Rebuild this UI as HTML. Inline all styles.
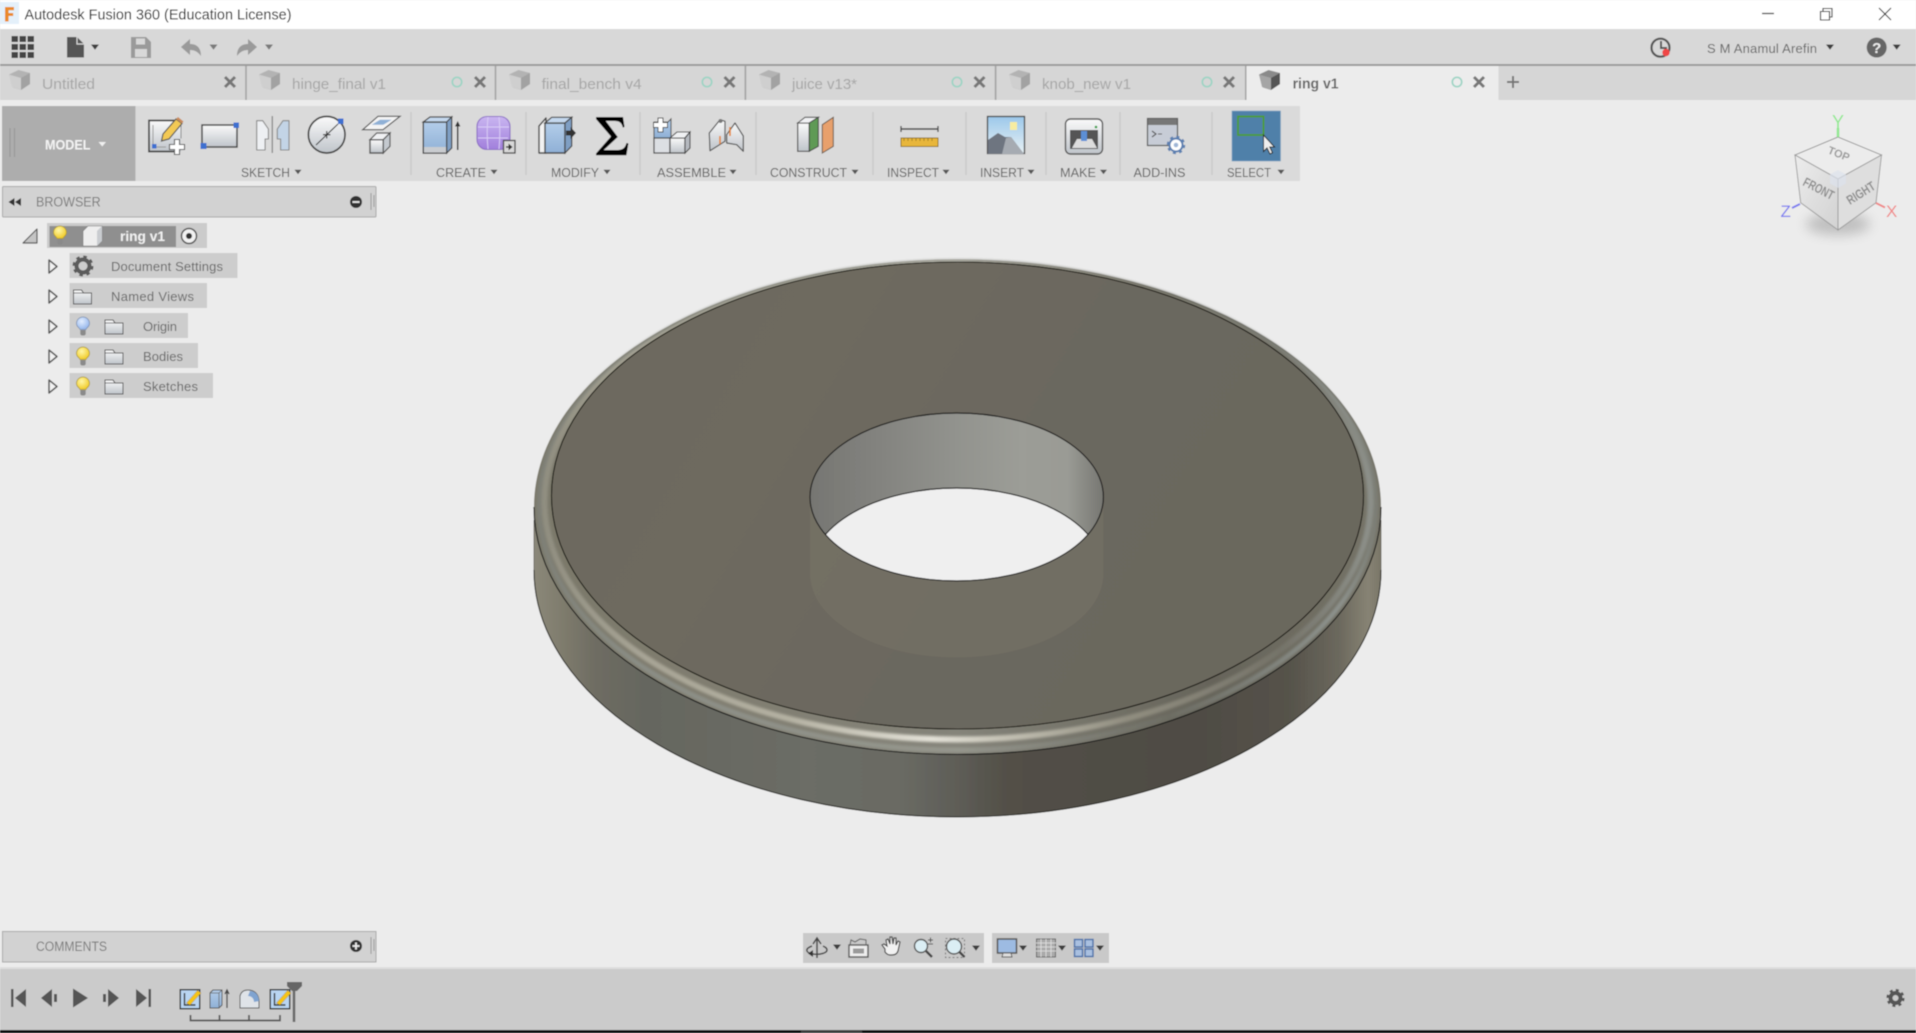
<!DOCTYPE html>
<html><head><meta charset="utf-8"><title>Autodesk Fusion 360</title>
<style>
html,body{margin:0;padding:0;background:#ececec;width:1916px;height:1033px;overflow:hidden}
svg{display:block;position:absolute;left:0;top:0}
text{font-family:"Liberation Sans",sans-serif}
.tab{font-size:15px;fill:#a6a6a6}
.lbl{font-size:13px;fill:#5f5f5f}
.tree{font-size:13px;fill:#666}
</style></head><body>
<svg width="1916" height="1033" viewBox="0 0 1916 1033" xmlns="http://www.w3.org/2000/svg">
<defs>
<filter id="soft" x="0" y="0" width="100%" height="100%"><feGaussianBlur stdDeviation="0.45"/></filter>
<filter id="b2" x="-5%" y="-5%" width="110%" height="110%"><feGaussianBlur stdDeviation="1.2"/></filter>
<filter id="b6" x="-30%" y="-50%" width="160%" height="200%"><feGaussianBlur stdDeviation="6"/></filter>
<linearGradient id="lt" x1="0" y1="0" x2="0" y2="1"><stop offset="0" stop-color="#fafafa"/><stop offset="1" stop-color="#bfc4ca"/></linearGradient>
<linearGradient id="blu" x1="0" y1="0" x2="0" y2="1"><stop offset="0" stop-color="#b3cde9"/><stop offset="1" stop-color="#8fb0d6"/></linearGradient>
<linearGradient id="sky" x1="0" y1="0" x2="0" y2="1"><stop offset="0" stop-color="#9cc8ea"/><stop offset="1" stop-color="#e8f1f5"/></linearGradient>
<linearGradient id="pur" x1="0" y1="0" x2="0" y2="1"><stop offset="0" stop-color="#c9b5f0"/><stop offset="1" stop-color="#a17fdc"/></linearGradient>
<radialGradient id="ybulb" cx=".4" cy=".35" r=".7"><stop offset="0" stop-color="#fff7a8"/><stop offset="1" stop-color="#f0c81e"/></radialGradient>
<radialGradient id="bbulb" cx=".4" cy=".35" r=".7"><stop offset="0" stop-color="#e3eeff"/><stop offset="1" stop-color="#8fb2ea"/></radialGradient>
<linearGradient id="side" gradientUnits="userSpaceOnUse" x1="534" y1="0" x2="1381" y2="0">
<stop offset="0" stop-color="#8b8879"/><stop offset=".03" stop-color="#807d6e"/><stop offset=".07" stop-color="#6f6d63"/><stop offset=".13" stop-color="#65665f"/><stop offset=".32" stop-color="#6c6d66"/><stop offset=".43" stop-color="#6a6b64"/><stop offset=".5" stop-color="#5e5d57"/><stop offset=".56" stop-color="#524f47"/><stop offset=".78" stop-color="#4f4c44"/><stop offset=".89" stop-color="#55524a"/><stop offset=".95" stop-color="#6b685d"/><stop offset=".985" stop-color="#878374"/><stop offset="1" stop-color="#7a7668"/></linearGradient>
<linearGradient id="fil" gradientUnits="userSpaceOnUse" x1="534" y1="0" x2="1381" y2="0">
<stop offset="0" stop-color="#7a786a"/><stop offset=".15" stop-color="#7f7c6e"/><stop offset=".5" stop-color="#85847a"/><stop offset=".8" stop-color="#66645a"/><stop offset="1" stop-color="#767468"/></linearGradient>
<linearGradient id="hi" gradientUnits="userSpaceOnUse" x1="534" y1="0" x2="1381" y2="0">
<stop offset="0" stop-color="#8e8c7e"/><stop offset=".12" stop-color="#a6a394"/><stop offset=".3" stop-color="#b4b1a2"/><stop offset=".47" stop-color="#e4e2d8"/><stop offset=".55" stop-color="#c6c3b6"/><stop offset=".7" stop-color="#918e80"/><stop offset=".88" stop-color="#757369"/><stop offset="1" stop-color="#8f938d"/></linearGradient>
<linearGradient id="hi2" gradientUnits="userSpaceOnUse" x1="534" y1="0" x2="1381" y2="0">
<stop offset="0" stop-color="#7e7f76"/><stop offset=".12" stop-color="#8a8d85"/><stop offset=".5" stop-color="#96978e"/><stop offset=".75" stop-color="#6d6d64"/><stop offset=".95" stop-color="#8d928d"/><stop offset="1" stop-color="#7a7b72"/></linearGradient>
<linearGradient id="face" gradientUnits="userSpaceOnUse" x1="552" y1="263" x2="1363" y2="729">
<stop offset="0" stop-color="#6d695f"/><stop offset=".3" stop-color="#6e6a5f"/><stop offset=".6" stop-color="#6b675e"/><stop offset="1" stop-color="#6c685d"/></linearGradient>
<linearGradient id="wall" gradientUnits="userSpaceOnUse" x1="810" y1="0" x2="1103" y2="0">
<stop offset="0" stop-color="#767672"/><stop offset=".25" stop-color="#848480"/><stop offset=".5" stop-color="#92938e"/><stop offset=".72" stop-color="#9c9d97"/><stop offset=".88" stop-color="#9a9b95"/><stop offset="1" stop-color="#777772"/></linearGradient>
<clipPath id="holeTop"><ellipse cx="956.7" cy="497" rx="146.7" ry="84"/></clipPath>
<linearGradient id="cubeF" x1="0" y1="0" x2="1" y2="1"><stop offset="0" stop-color="#ececec"/><stop offset="1" stop-color="#d2d2d2"/></linearGradient>
<g id="caret"><path d="M-4-2.500h8L0 2.700z" fill="#3c3c3c"/></g>
<g id="caretL"><path d="M-3.500-2.300h7L0 2.300z" fill="#555"/></g>
<g id="tabcube"><path d="M0 4.5 9.5 0 21 3v11l-9 6-8-2.5z" fill="#b3b3b3"/><path d="M0 4.5 12 8v12l-9-3z" fill="#cfcfcf"/><path d="M12 8l9-5v11l-9 6z" fill="#a2a2a2"/></g>
<g id="x"><path d="M-5-5 5 5M5-5-5 5" stroke="#777" stroke-width="3"/></g>
<g id="dot"><circle r="4.7" fill="none" stroke="#9cd4c4" stroke-width="1.7"/></g>
<g id="bulbY"><path d="M-3-.5c0-1.500-3.500-2.500-3.500-6a6.500 6.500 0 0 1 13 0c0 3.500-3.500 4.500-3.500 6z" fill="url(#ybulb)" stroke="#a89530" stroke-width=".8"/><path d="M-2.700 0h5.400v4.200l-1.200 1.300h-3l-1.200-1.300z" fill="#8a8a8a"/></g>
<g id="bulbB"><path d="M-3-.5c0-1.500-3.500-2.500-3.500-6a6.500 6.500 0 0 1 13 0c0 3.500-3.500 4.500-3.500 6z" fill="url(#bbulb)" stroke="#7d90b0" stroke-width=".8"/><path d="M-2.700 0h5.400v4.200l-1.200 1.300h-3l-1.200-1.300z" fill="#8a8a8a"/></g>
<g id="folder"><path d="M.5 15V1h8l2 3h8v11z" fill="url(#lt)" stroke="#555" stroke-width="1"/><path d="M.5 4h18" stroke="#555" stroke-width=".8"/></g>
<g id="arrow"><path d="M1 1 9 7.5 1 14z" fill="#f2f2f2" stroke="#555" stroke-width="1.5" stroke-linejoin="round"/></g>
<g id="skico"><rect x=".7" y=".7" width="19.5" height="19" fill="#b9d6f2" stroke="#2b2b2b" stroke-width="1.4"/><path d="M5 4v12h11" fill="none" stroke="#333" stroke-width="1.4"/><path d="M7 14 18 1.500l3.500 2.500-11 12z" fill="#f5c518" stroke="#8a6d00" stroke-width=".4"/></g>
</defs>

<g filter="url(#soft)">
<rect width="1916" height="1033" fill="#ececec"/>
<rect width="1916" height="29" fill="#fff"/>
<rect y="29" width="1916" height="35" fill="#d8d8d8"/>
<rect y="64" width="1916" height="2" fill="#9b9b9b"/>
<rect y="66" width="1916" height="34" fill="#d6d6d6"/>

<!-- title bar -->
<rect x="0" y="2" width="19" height="22" fill="#e4f0fa"/>
<path d="M5 7h9v3.2H8.6v2.8h4.6v3H8.6v5.5H5z" fill="#ea8a2a"/>
<text x="24.5" y="19.500" font-size="14.5" fill="#111" textLength="267" lengthAdjust="spacingAndGlyphs">Autodesk Fusion 360 (Education License)</text>
<path d="M1762 13.5h12" stroke="#111" stroke-width="1.2"/>
<path d="M1823 11V8.5h9V17h-2.5M1820.5 11.5h9v8.5h-9z" fill="none" stroke="#111" stroke-width="1.1"/>
<path d="M1879 8l12 12M1891 8l-12 12" stroke="#111" stroke-width="1"/>

<!-- toolbar left -->
<g fill="#444"><rect x="11.5" y="36" width="6.5" height="6"/><rect x="19.5" y="36" width="6.5" height="6"/><rect x="27.5" y="36" width="6.5" height="6"/><rect x="11.5" y="44" width="6.5" height="6"/><rect x="19.5" y="44" width="6.5" height="6"/><rect x="27.5" y="44" width="6.5" height="6"/><rect x="11.5" y="52" width="6.5" height="6"/><rect x="19.5" y="52" width="6.5" height="6"/><rect x="27.5" y="52" width="6.5" height="6"/></g>
<path d="M67 37h10l7 7v13.5H67z" fill="#555"/><path d="M77 37v7h7" fill="none" stroke="#d8d8d8" stroke-width="1.2"/>
<use href="#caret" x="95" y="47"/>
<path d="M131 37h15l5 5v16h-20z" fill="#9a9a9a"/><rect x="136" y="38.5" width="9" height="6" fill="#d8d8d8"/><rect x="135" y="49" width="12" height="8" fill="#d8d8d8"/>
<path d="M181 47l9-8v5c7 0 11 4 11 12-3-4-6-6-11-6v5z" fill="#9a9a9a"/>
<use href="#caret" x="213.5" y="47" opacity=".6"/>
<path d="M257 47l-9-8v5c-7 0-11 4-11 12 3-4 6-6 11-6v5z" fill="#9a9a9a"/>
<use href="#caret" x="269" y="47" opacity=".6"/>

<!-- toolbar right -->
<circle cx="1660.5" cy="47.7" r="9" fill="none" stroke="#555" stroke-width="2.2"/>
<path d="M1661 41v7h6" fill="none" stroke="#555" stroke-width="2"/>
<circle cx="1666" cy="52.5" r="3.7" fill="#ef4444"/>
<text x="1707" y="53" font-size="13" fill="#666" textLength="110" lengthAdjust="spacing">S M Anamul Arefin</text>
<use href="#caret" x="1830" y="47"/>
<circle cx="1876.7" cy="47.5" r="10" fill="#666"/>
<text x="1876.7" y="53" font-size="15" font-weight="bold" fill="#eee" text-anchor="middle">?</text>
<use href="#caret" x="1896.7" y="47"/>

<!-- tabs -->
<g stroke="#a3a3a3" stroke-width="1.6"><path d="M246 66v34M495.5 66v34M745.4 66v34M995.6 66v34M1245.8 66v34"/></g>
<rect x="1246.5" y="66" width="252" height="40" fill="#ececec"/>
<use href="#tabcube" x="9" y="70"/>
<text x="42" y="89" class="tab" textLength="53" lengthAdjust="spacingAndGlyphs">Untitled</text>
<use href="#x" x="230" y="82"/>
<use href="#tabcube" x="259" y="70"/>
<text x="292" y="89" class="tab" textLength="94" lengthAdjust="spacingAndGlyphs">hinge_final v1</text>
<use href="#dot" x="457" y="82"/><use href="#x" x="480" y="82"/>
<use href="#tabcube" x="509" y="70"/>
<text x="541.6" y="89" class="tab" textLength="100" lengthAdjust="spacingAndGlyphs">final_bench v4</text>
<use href="#dot" x="707" y="82"/><use href="#x" x="729.5" y="82"/>
<use href="#tabcube" x="759" y="70"/>
<text x="792" y="89" class="tab" textLength="65" lengthAdjust="spacingAndGlyphs">juice v13*</text>
<use href="#dot" x="957" y="82"/><use href="#x" x="979.5" y="82"/>
<use href="#tabcube" x="1009" y="70"/>
<text x="1042" y="89" class="tab" textLength="89" lengthAdjust="spacingAndGlyphs">knob_new v1</text>
<use href="#dot" x="1207" y="82"/><use href="#x" x="1229" y="82"/>
<g transform="translate(1259,70)"><path d="M0 4.5 9.5 0 21 3v11l-9 6-8-2.5z" fill="#8a8a8a"/><path d="M0 4.5 12 8v12l-9-3z" fill="#a5a5a5"/><path d="M12 8l9-5v11l-9 6z" fill="#555"/></g>
<text x="1292.6" y="88.500" font-size="14.5" font-weight="bold" fill="#666" textLength="46" lengthAdjust="spacingAndGlyphs">ring v1</text>
<use href="#dot" x="1457" y="82"/><use href="#x" x="1479" y="82"/>
<path d="M1513 76v12M1507 82h12" stroke="#777" stroke-width="2"/>

<!-- ribbon -->
<rect x="2" y="106" width="1298" height="75" fill="#dadada"/>
<rect x="2" y="106" width="133.5" height="75" fill="#adadad"/>
<path d="M10 128v29M14.5 128v29" stroke="#9a9a9a" stroke-width="1.2"/>
<text x="45" y="149.500" font-size="13.5" font-weight="bold" fill="#f4f4f4" textLength="45.5" lengthAdjust="spacingAndGlyphs">MODEL</text>
<path d="M98.500 142h7.500l-3.750 4.500z" fill="#f0f0f0"/>
<g stroke="#c6c6c6" stroke-width="1.2"><path d="M411 112v63M526 112v63M640 112v63M756 112v63M873 112v63M966 112v63M1046 112v63M1120 112v63M1212 112v63"/></g>

<!-- Sketch icons -->
<path d="M149 120.500h32v31h-32z" fill="url(#lt)"/>
<path d="M181 120.500h-32v31h29" fill="none" stroke="#444" stroke-width="1.700"/><path d="M181 120.500v18" stroke="#888" stroke-width="1"/>
<path d="M153 125v22h13" fill="none" stroke="#999" stroke-width="1"/>
<rect x="152" y="144" width="4.500" height="4.500" fill="#3c6fd0"/>
<path d="M163 134 176 119l6 4.500-13 15.500-7.500 2z" fill="#f3c954" stroke="#555" stroke-width="1.200"/>
<path d="M176 119l6 4.500 1.500-2-5.500-4.500z" fill="#c98a5a"/>
<path d="M174.500 139.500h5v5h5v5h-5v5h-5v-5h-5v-5h5z" fill="#fff" stroke="#555" stroke-width="1.100"/>
<rect x="202" y="125" width="35" height="22" fill="url(#lt)" stroke="#444" stroke-width="1.500"/>
<rect x="233.500" y="122.500" width="5.500" height="5.500" fill="#3c6fd0"/><rect x="200.500" y="143" width="6" height="6" fill="#3c6fd0"/>
<path d="M256.700 120.700h6l5.700 8.300v10h-3.300v11h-8.400z" fill="#eef0f3" stroke="#888" stroke-width="1.100" stroke-linejoin="round"/>
<path d="M272.300 116v37" stroke="#888" stroke-width="1.300"/>
<path d="M289 120.700h-6l-5.700 8.300v10h3.300v11h8.400z" fill="#c3d4e6" stroke="#888" stroke-width="1.100" stroke-linejoin="round"/>
<circle cx="326.700" cy="134.700" r="18.300" fill="url(#lt)" stroke="#444" stroke-width="1.700"/>
<path d="M316 145l22-21M323 134.700h7.500M326.700 131v7.500" stroke="#333" stroke-width="1.100"/>
<rect x="338" y="118.500" width="5.500" height="5.500" fill="#3c6fd0"/>
<path d="M362.700 129.700 378 116.300h22l-17 13.400z" fill="#f4f4f4" stroke="#555" stroke-width="1.200"/>
<path d="M371.700 124.700 380 119.700h11.700l-8.400 5z" fill="#8fb0d6"/>
<path d="M370 139.700h13.300V153H370z" fill="url(#lt)" stroke="#555" stroke-width="1.400"/>
<path d="M370 139.700 376.700 133H390l-6.700 6.700z" fill="#f0f1f3" stroke="#555" stroke-width="1.200"/>
<path d="M383.300 139.700 390 133v13.300L383.300 153z" fill="#c4c9cf" stroke="#555" stroke-width="1.200"/>

<!-- Create -->
<path d="M423.300 122h23.400v31h-23.400z" fill="url(#blu)" stroke="#444" stroke-width="1.400"/>
<rect x="424" y="147" width="22" height="5.500" fill="#c9ccd0"/>
<path d="M423.300 122 430 117h21.700l-5 5z" fill="#c4d8ee" stroke="#444" stroke-width="1.200"/>
<path d="M446.700 122l5-5v31l-5 5z" fill="#7f9fc4" stroke="#444" stroke-width="1.200"/>
<path d="M457.700 150v-26" stroke="#333" stroke-width="1.500"/><path d="M455 126.500l2.700-5.500 2.700 5.500z" fill="#333"/>
<rect x="477" y="116.500" width="33" height="33" rx="10" fill="url(#pur)" stroke="#8d70c4" stroke-width="1.100"/>
<path d="M478 127h31M478 138h30M488 117c-1 10-1 22 0 32M499 117c1 10 1 22 0 32" stroke="#dacdf6" stroke-width="1" fill="none"/>
<rect x="503.500" y="140.500" width="11.500" height="12.500" fill="#d9d9d9" stroke="#444" stroke-width="1.300"/>
<path d="M506 147h3" stroke="#333" stroke-width="1.400"/><path d="M508.500 143.500l4 3.500-4 3.500z" fill="#333"/>

<!-- Modify -->
<path d="M539 153v-27l7-8v35z" fill="#f2f2f2" stroke="#444" stroke-width="1.400" stroke-linejoin="round"/>
<path d="M545 123h20v30h-20z" fill="url(#blu)" stroke="#444" stroke-width="1.400"/>
<path d="M545 123l6.700-5.700h20L565 123z" fill="#c4d8ee" stroke="#444" stroke-width="1.200"/>
<path d="M565 123l6.700-5.700V146L565 153z" fill="#7f9fc4" stroke="#444" stroke-width="1.200"/>
<path d="M566 130.500h4.500V127l5.500 6-5.500 6v-3.500H566z" fill="#333"/>
<path d="M596 117h27l1.500 10-1.700.5c-1-4.500-3-6.500-8-6.500h-9l12 16-14 13h14c5 0 7.500-2.500 8.700-7l1.900.5-2 11.700H596v-1.700l15-17-15-17.500z" fill="#000"/>

<!-- Assemble -->
<path d="M654 122h14l3-3v19h-17z" fill="url(#blu)" stroke="#555" stroke-width="1.100"/>
<path d="M658 118h5v4.500h4.500v5H663v4.500h-5v-4.500h-4.500v-5h4.500z" fill="#fff" stroke="#444" stroke-width="1"/>
<rect x="654" y="138" width="16" height="15" fill="#dcdfe3" stroke="#444" stroke-width="1.200"/>
<rect x="670" y="138" width="15" height="15" fill="url(#lt)" stroke="#444" stroke-width="1.200"/>
<path d="M670 138l7-6h13l-5 6z" fill="#f0f1f3" stroke="#444" stroke-width="1.100"/>
<path d="M685 138l5-6v16l-5 5z" fill="#b5b9bf" stroke="#444" stroke-width="1.100"/>
<path d="M709.300 133 720 119.700l5 1.600v20l-15 9.400z" fill="url(#lt)" stroke="#555" stroke-width="1.200" stroke-linejoin="round"/>
<path d="M735 123 743.300 136v15.300l-6.600-6.600-10-1.700v-8.300z" fill="url(#lt)" stroke="#555" stroke-width="1.200" stroke-linejoin="round"/>
<circle cx="720.500" cy="121" r="2" fill="#777"/>
<path d="M720 136v8M730 127v9" stroke="#e67e22" stroke-width="1.500"/>

<!-- Construct -->
<path d="M797.700 123h11.600v28.300h-11.600z" fill="url(#lt)" stroke="#555" stroke-width="1.200"/>
<path d="M797.700 123l7.300-5.700h13.300l-9 5.700z" fill="#f0f1f3" stroke="#555" stroke-width="1.100"/>
<path d="M809.300 123l9-5.700v29l-9 5z" fill="#5f9a55" stroke="#444" stroke-width="1"/>
<path d="M822.300 124.700l11-7.400v29L822.300 153z" fill="#e8a06c" stroke="#6b5a4c" stroke-width="1"/>

<!-- Inspect -->
<path d="M901 126v6M938 126v6" stroke="#444" stroke-width="1.3"/><path d="M901 129h37" stroke="#444" stroke-width="1.5"/>
<rect x="901" y="138" width="37" height="8.500" fill="#e8b63a" stroke="#8a6d1f" stroke-width=".9"/>
<path d="M904 138v3M908 138v3M912 138v3M916 138v3M920 138v3M924 138v3M928 138v3M932 138v3" stroke="#8a6d1f" stroke-width=".7"/>

<!-- Insert -->
<rect x="987.500" y="116.500" width="37" height="37" fill="url(#sky)" stroke="#444" stroke-width="1.300"/>
<rect x="1010" y="122" width="7" height="8" fill="#f7eca0"/>
<path d="M988 154v-14l10-7 7 4 6 0 13 17z" fill="#6e7480"/><path d="M1002 154l4-16 5-1 13 17z" fill="#a6abb2"/>

<!-- Make -->
<rect x="1065.500" y="119" width="37" height="35" rx="5" fill="url(#lt)" stroke="#555" stroke-width="1.400"/>
<rect x="1070" y="130" width="28" height="19" fill="#555"/>
<path d="M1072 148l5-9h15l5 9z" fill="#ddd"/>
<rect x="1081" y="131" width="6" height="10" fill="#5b8fd6"/>
<circle cx="1096" cy="127" r="1.300" fill="#2c9b3c"/>

<!-- Add-ins -->
<rect x="1147.500" y="118.500" width="30" height="27" fill="#c7ccd6" stroke="#555" stroke-width="1.200"/>
<rect x="1148" y="119" width="29" height="6" fill="#777"/>
<path d="M1152 131l4 3-4 3M1158 134h4" fill="none" stroke="#555" stroke-width="1.100"/>
<circle cx="1176" cy="145" r="6.500" fill="#fff" stroke="#5b7fb0" stroke-width="2"/>
<circle cx="1176" cy="145" r="8" fill="none" stroke="#5b7fb0" stroke-width="2.500" stroke-dasharray="3 3.300"/>
<circle cx="1176" cy="145" r="2.300" fill="#9fb6d6"/>

<!-- Select -->
<rect x="1232" y="111" width="48.500" height="50" fill="#4f80a9" stroke="#7aa0c0" stroke-width=".6"/>
<rect x="1238" y="116.500" width="25.500" height="18.500" fill="none" stroke="#4e9a3c" stroke-width="2"/>
<path d="M1263.500 135v16.500l3.500-3.500 3 6 2.500-1.200-2.700-5.800h4.700z" fill="#eee" stroke="#222" stroke-width="1"/>

<!-- Ribbon labels -->
<text x="241" y="177" class="lbl" textLength="49" lengthAdjust="spacingAndGlyphs">SKETCH</text><use href="#caretL" x="298" y="172"/>
<text x="436" y="177" class="lbl" textLength="50" lengthAdjust="spacingAndGlyphs">CREATE</text><use href="#caretL" x="494" y="172"/>
<text x="551" y="177" class="lbl" textLength="48" lengthAdjust="spacingAndGlyphs">MODIFY</text><use href="#caretL" x="607" y="172"/>
<text x="657" y="177" class="lbl" textLength="69" lengthAdjust="spacingAndGlyphs">ASSEMBLE</text><use href="#caretL" x="733" y="172"/>
<text x="770" y="177" class="lbl" textLength="77" lengthAdjust="spacingAndGlyphs">CONSTRUCT</text><use href="#caretL" x="855" y="172"/>
<text x="887" y="177" class="lbl" textLength="52" lengthAdjust="spacingAndGlyphs">INSPECT</text><use href="#caretL" x="946" y="172"/>
<text x="980" y="177" class="lbl" textLength="44" lengthAdjust="spacingAndGlyphs">INSERT</text><use href="#caretL" x="1031" y="172"/>
<text x="1060" y="177" class="lbl" textLength="36" lengthAdjust="spacingAndGlyphs">MAKE</text><use href="#caretL" x="1103.500" y="172"/>
<text x="1133.500" y="177" class="lbl" textLength="52" lengthAdjust="spacingAndGlyphs">ADD-INS</text>
<text x="1227" y="177" class="lbl" textLength="44" lengthAdjust="spacingAndGlyphs">SELECT</text><use href="#caretL" x="1281" y="172"/>

<!-- Browser -->
<rect x="2.500" y="186.500" width="373.500" height="30.500" rx="1" fill="#d2d2d2" stroke="#a8a8a8"/>
<path d="M14.500 198v8l-6-4zM21 198v8l-6-4z" fill="#333"/>
<text x="36" y="206.500" font-size="13.500" fill="#7a7a7a" textLength="64.700" lengthAdjust="spacingAndGlyphs">BROWSER</text>
<circle cx="356" cy="202" r="6" fill="#333"/><path d="M352.500 202h7" stroke="#eee" stroke-width="1.800"/>
<path d="M371 193v17M374 195v12" stroke="#999" stroke-width="1"/>

<path d="M37 229v14H23z" fill="#c4c4c4" stroke="#555" stroke-width="1.200" stroke-linejoin="round"/>
<rect x="47" y="223" width="160" height="25" fill="#cbcbcb"/>
<rect x="49.500" y="226" width="126.500" height="21" fill="#8f8f8f"/>
<use href="#bulbY" x="60" y="239"/>
<path d="M83 231l5-5h14v15l-5 5H83z" fill="#eee" stroke="#777" stroke-width=".6"/><path d="M97 231l5-5v15l-5 5z" fill="#c9ccd0"/>
<text x="120" y="241" font-size="13.500" font-weight="bold" fill="#f2f2f2" textLength="45" lengthAdjust="spacingAndGlyphs">ring v1</text>
<circle cx="189" cy="236" r="7.500" fill="#f2f2f2" stroke="#555" stroke-width="1.500"/><circle cx="189" cy="236" r="3" fill="#333"/>

<rect x="69.500" y="253" width="168" height="25" fill="#cdcdcd"/>
<use href="#arrow" x="48" y="259"/>
<circle cx="83" cy="266" r="6.500" fill="none" stroke="#5c5c5c" stroke-width="4"/>
<circle cx="83" cy="266" r="9" fill="none" stroke="#5c5c5c" stroke-width="3" stroke-dasharray="3.500 3.570"/>
<text x="111" y="271" class="tree" textLength="112" lengthAdjust="spacing">Document Settings</text>

<rect x="69.500" y="283" width="137.500" height="25" fill="#cdcdcd"/>
<use href="#arrow" x="48" y="289"/>
<use href="#folder" x="73" y="289"/>
<text x="111" y="301" class="tree" textLength="83" lengthAdjust="spacing">Named Views</text>

<rect x="69.500" y="313" width="118.500" height="25" fill="#cdcdcd"/>
<use href="#arrow" x="48" y="319"/>
<use href="#bulbB" x="83" y="330"/>
<use href="#folder" x="104.500" y="319"/>
<text x="143" y="331" class="tree" textLength="34" lengthAdjust="spacing">Origin</text>

<rect x="69.500" y="343" width="128.500" height="25" fill="#cdcdcd"/>
<use href="#arrow" x="48" y="349"/>
<use href="#bulbY" x="83" y="360"/>
<use href="#folder" x="104.500" y="349"/>
<text x="143" y="361" class="tree" textLength="40" lengthAdjust="spacing">Bodies</text>

<rect x="69.500" y="373" width="143.500" height="25" fill="#cdcdcd"/>
<use href="#arrow" x="48" y="379"/>
<use href="#bulbY" x="83" y="390"/>
<use href="#folder" x="104.500" y="379"/>
<text x="143" y="391" class="tree" textLength="55" lengthAdjust="spacing">Sketches</text>

<!-- Comments -->
<rect x="2.500" y="931.500" width="373.500" height="30.500" fill="#d2d2d2" stroke="#a8a8a8"/>
<text x="36" y="951" font-size="13.500" fill="#7a7a7a" textLength="71" lengthAdjust="spacingAndGlyphs">COMMENTS</text>
<circle cx="356" cy="946" r="6" fill="#333"/><path d="M352.500 946h7M356 942.500v7" stroke="#eee" stroke-width="1.800"/>
<path d="M371 937v17M374 939v12" stroke="#999" stroke-width="1"/>

<!-- ViewCube -->
<ellipse cx="1838" cy="224" rx="32" ry="11" fill="#999" opacity=".55" filter="url(#b6)"/>
<path d="M1838 137 1881.500 155 1838 179 1795 155z" fill="#ececec" stroke="#888" stroke-width=".9"/>
<path d="M1795 155 1838 179 1838 230 1800.700 202.700z" fill="url(#cubeF)" stroke="#999" stroke-width=".9"/>
<path d="M1881.500 155 1838 179 1838 230 1876 202.700z" fill="#dedede" stroke="#999" stroke-width=".9"/>
<path d="M1838 170l8 4.500v9l-8 4.500-8-4.500v-9z" fill="#dde3ec" opacity=".7"/>
<text transform="translate(1827,153) rotate(22)" font-size="11" fill="#9a9a9a" font-weight="bold">TOP</text>
<text transform="translate(1802,185) rotate(27)" font-size="13" fill="#8d8d8d" font-weight="bold" textLength="33" lengthAdjust="spacingAndGlyphs">FRONT</text>
<text transform="translate(1850,205) rotate(-32)" font-size="13" fill="#8d8d8d" font-weight="bold" textLength="31" lengthAdjust="spacingAndGlyphs">RIGHT</text>
<text x="1838" y="128" font-size="18" fill="#8fe88f" text-anchor="middle">Y</text>
<path d="M1838 128v9" stroke="#8fe88f" stroke-width="2.500"/>
<text x="1780.500" y="217" font-size="17" fill="#7a7aee">Z</text>
<path d="M1792 208l8-4" stroke="#7a7aee" stroke-width="2"/>
<text x="1886" y="217" font-size="17" fill="#f08888">X</text>
<path d="M1876 203l9 4.500" stroke="#f08888" stroke-width="2"/>

<!-- Ring -->
<g>
<path d="M534 507v63a423.500 247 0 0 0 847 0v-63z" fill="url(#side)"/>
<path d="M534 570a423.500 247 0 0 0 847 0" fill="none" stroke="#2a2a26" stroke-width="1.100"/>
<path d="M534 520v50M1381 520v50" stroke="#55534a" stroke-width=".7"/>
<ellipse cx="957.500" cy="507" rx="423.500" ry="247.500" fill="url(#fil)"/>
<g filter="url(#b2)">
<ellipse cx="957.500" cy="506" rx="418.500" ry="244" fill="none" stroke="url(#hi2)" stroke-width="5"/>
<ellipse cx="957.500" cy="502" rx="413" ry="237.500" fill="none" stroke="url(#hi)" stroke-width="6"/>
</g>
<path d="M534 507a423.500 247.500 0 0 0 847 0" fill="none" stroke="#1f1f1c" stroke-width="1.200"/>
<ellipse cx="957.500" cy="495.500" rx="406" ry="233.500" fill="url(#face)" stroke="#16160f" stroke-width="1.100"/>
<path d="M810 497v76.500a146.700 84 0 0 0 293.400 0V497z" fill="#7f7c6f" opacity=".32"/>
<ellipse cx="956.700" cy="497" rx="146.700" ry="84" fill="url(#wall)"/>
<ellipse cx="956.700" cy="572" rx="146.700" ry="84" fill="#efefef" clip-path="url(#holeTop)" stroke="#1c1c1c" stroke-width="1.200"/>
<ellipse cx="956.700" cy="497" rx="146.700" ry="84" fill="none" stroke="#1c1c1c" stroke-width="1.200"/>
</g>

<!-- Nav bar -->
<rect x="803" y="933" width="181" height="30" fill="#c9c9c9"/>
<rect x="992" y="933" width="117" height="30" fill="#c9c9c9"/>
<path d="M817 939v19M813 944l4-6 4 6" fill="none" stroke="#444" stroke-width="1.500"/>
<path d="M812 946c-8 3-6 7 1 8 7 1 14-1 14-4 0-2-2-3-4-4" fill="none" stroke="#444" stroke-width="1.500"/>
<path d="M813 950v7l-5-3.500z" fill="#333"/>
<use href="#caret" x="837" y="947"/>
<rect x="849" y="945" width="19" height="12" fill="#eee" stroke="#555" stroke-width="1.400"/><rect x="853" y="948.500" width="11" height="5" fill="#9a9a9a"/>
<path d="M850 945l1-5 4 2 5-3 6 1v5" fill="none" stroke="#666" stroke-width="1.100"/>
<path d="M885 949l-3-4 2-1 3 2-1-6 2-1 2 5 0-7h2l1 7 1-6h2l0 7 2-4 2 1-2 9c-1 3-3 4-6 4h-2c-3 0-4-2-5-3z" fill="#f2f2f2" stroke="#444" stroke-width="1.200"/>
<circle cx="921" cy="946" r="6.500" fill="#dbeef4" stroke="#555" stroke-width="1.400"/><path d="M926 951l6 6" stroke="#444" stroke-width="2.500"/><path d="M928 940h5M930.500 937.500v5M928 944h5" stroke="#444" stroke-width="1"/>
<rect x="945.500" y="938.500" width="19" height="19" fill="none" stroke="#777" stroke-width="1" stroke-dasharray="2 2"/>
<circle cx="954" cy="946.500" r="7.500" fill="#dbeef4" stroke="#555" stroke-width="1.400"/><path d="M959.500 952l5 5" stroke="#444" stroke-width="2.500"/>
<use href="#caret" x="976" y="948"/>
<rect x="997.500" y="939" width="19" height="14" fill="#9dbbe2" stroke="#555" stroke-width="1.500"/><path d="M1003 953h8l1 4h-10z" fill="#ddd" stroke="#555" stroke-width=".9"/>
<use href="#caret" x="1023" y="948"/>
<rect x="1036.500" y="939" width="19" height="18" fill="#aaa" stroke="#666" stroke-width="1"/>
<path d="M1036 943h20M1036 947h20M1036 951h20M1041 939v18M1046 939v18M1051 939v18" stroke="#e4e4e4" stroke-width=".8"/>
<use href="#caret" x="1062" y="948"/>
<rect x="1074.500" y="939.500" width="8" height="7.500" fill="#a9c0e0" stroke="#4a6fa8" stroke-width="1.400"/><rect x="1085" y="939.500" width="8" height="7.500" fill="#a9c0e0" stroke="#4a6fa8" stroke-width="1.400"/><rect x="1074.500" y="949" width="8" height="7.500" fill="#a9c0e0" stroke="#4a6fa8" stroke-width="1.400"/><rect x="1085" y="949" width="8" height="7.500" fill="#a9c0e0" stroke="#4a6fa8" stroke-width="1.400"/>
<use href="#caret" x="1100" y="948"/>

<!-- Bottom bar -->
<rect y="967" width="1916" height="2" fill="#dedede"/>
<rect y="969" width="1916" height="61" fill="#cbcbcb"/>
<rect y="1030" width="1916" height="3" fill="#0a0a08"/>
<rect x="801" y="1030" width="61" height="3" fill="#3a3a3a"/>
<g fill="#555">
<path d="M11 989h2.500v18H11zM26 989v18l-11-9z"/>
<path d="M52 989v18l-11-9zM54 994h3v8h-3z"/>
<path d="M73 988.500v19l15-9.500z"/>
<path d="M108 989v18l11-9zM103 994h3v8h-3z"/>
<path d="M136 989v18l11-9zM148.500 989h2.500v18h-2.500z"/>
</g>
<use href="#skico" x="179.500" y="989"/>
<path d="M210 993l3-3h9v15l-3 3h-9z" fill="url(#blu)" stroke="#555" stroke-width="1"/><path d="M210 993h9v15M219 993l3-3" fill="none" stroke="#666" stroke-width=".8"/>
<path d="M227 1008V992M225 994l2-4 2 4" fill="none" stroke="#333" stroke-width="1.200"/>
<path d="M240 1008v-12c1-4 4-6 8-6 7 0 11 5 11 12v6z" fill="#dfe3e8" stroke="#555" stroke-width="1"/>
<path d="M250 991c5 0 9 4 9 10l-5 1c0-3-2-6-6-6z" fill="#7fa3d0"/>
<use href="#skico" x="269.500" y="989"/>
<path d="M287 982h15v4l-5 5h-5l-5-5z" fill="#666"/><path d="M294 989v33" stroke="#666" stroke-width="2.500"/>
<path d="M190.500 1015v5.500h89.500v-5.500M219.500 1015v5.500M249 1015v5.500" fill="none" stroke="#555" stroke-width="1.700"/>
<circle cx="1895.500" cy="998" r="5" fill="none" stroke="#555" stroke-width="4"/>
<circle cx="1895.500" cy="998" r="7.700" fill="none" stroke="#555" stroke-width="2.800" stroke-dasharray="3 3.050"/>
</g>
</svg>
</body></html>
